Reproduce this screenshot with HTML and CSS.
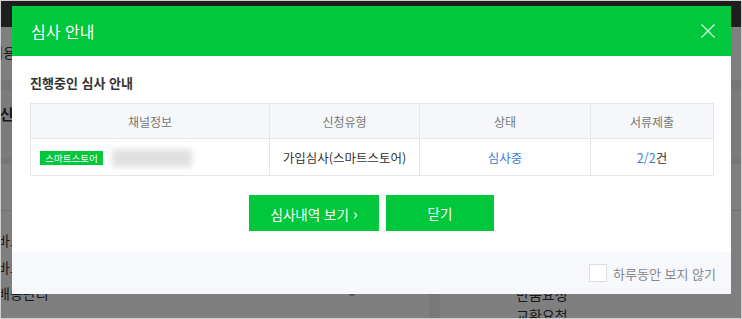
FILE: index.html
```html
<!DOCTYPE html>
<html lang="ko">
<head>
<meta charset="utf-8">
<title>심사 안내</title>
<link rel="stylesheet" href="styles.css">
</head>
<body>
<div class="frame">
  <div class="page">
    <div class="topbar"></div>
    <div class="section-top"><span class="cut-text">내용</span></div>
    <div class="panel"><span class="panel-title">최신</span></div>
    <div class="section-mid"></div>
    <div class="lower">
      <div class="lower-left">
        <div class="row-item">바로가기</div>
        <div class="row-item">바로가기</div>
        <div class="row-item">배송관리 <span class="dot"></span></div>
      </div>
      <div class="divider"></div>
      <div class="lower-right">
        <div class="row-item">반품요청</div>
        <div class="row-item">교환요청</div>
      </div>
    </div>
  </div>
  <div class="overlay"></div>

  <div class="modal">
    <div class="modal-header">
      <h1 class="modal-title">심사 안내</h1>
      <button class="close-btn" aria-label="닫기">
        <svg width="14" height="14" viewBox="0 0 14 14"><path d="M0.5 0.5L13.5 13.5M13.5 0.5L0.5 13.5" stroke="#d6f7e0" stroke-width="1.2" fill="none"/></svg>
      </button>
    </div>
    <div class="modal-body">
      <h2 class="sub-title">진행중인 심사 안내</h2>
      <table class="info-table">
        <colgroup>
          <col class="c1"><col class="c2"><col class="c3"><col class="c4">
        </colgroup>
        <thead>
          <tr><th>채널정보</th><th>신청유형</th><th>상태</th><th>서류제출</th></tr>
        </thead>
        <tbody>
          <tr>
            <td class="channel"><span class="badge">스마트스토어</span><span class="blurred"></span></td>
            <td>가입심사(스마트스토어)</td>
            <td><a class="link">심사중</a></td>
            <td><a class="link">2/2</a>건</td>
          </tr>
        </tbody>
      </table>
      <div class="actions">
        <button class="btn btn-wide">심사내역 보기 <span class="chev">›</span></button>
        <button class="btn btn-close">닫기</button>
      </div>
    </div>
    <div class="modal-footer">
      <label class="check"><span class="box"></span><span class="check-text">하루동안 보지 않기</span></label>
    </div>
  </div>
</div>
</body>
</html>
```
FILE: styles.css
```css
* { box-sizing: border-box; }
html, body { margin: 0; padding: 0; }
body {
  width: 742px;
  height: 319px;
  overflow: hidden;
  font-family: "Noto Sans CJK KR", "Noto Sans", sans-serif;
}
.frame {
  position: relative;
  width: 742px;
  height: 319px;
  overflow: hidden;
  border: 1px solid #cfcfcf;
}
.page {
  display: flex;
  flex-direction: column;
  height: 100%;
  background: #fff;
  color: #333;
  font-size: 13px;
}
.topbar { height: 26px; background: #3a3e3e; flex: none; }
.section-top { height: 53px; display: flex; align-items: center; flex: none; padding-bottom: 4px; }
.cut-text { margin-left: -11px; font-size: 14px; }
.panel {
  height: 84px;
  background: #f7f7f7;
  border-top: 10px solid #ececec;
  border-bottom: 6px solid #ececec;
  display: flex;
  align-items: center;
  flex: none;
  padding-bottom: 22px;
}
.panel-title { margin-left: -15px; font-weight: 700; font-size: 15px; }
.section-mid { height: 47px; border-bottom: 1px solid #e2e2e2; flex: none; }
.lower { display: flex; flex: 1; }
.lower-left { width: 428px; padding-top: 16px; }
.row-item { height: 26.5px; display: flex; align-items: center; margin-left: -4px; font-size: 14px; }
.dot { display: inline-block; width: 6px; height: 6px; border-radius: 50%; background: #b08ad0; margin-left: 300px; }
.divider { width: 11px; background: #f2f2f2; }
.lower-right { padding-left: 76px; padding-top: 72px; }
.lower-right .row-item { margin-left: 0; height: 21px; }
.overlay { position: absolute; inset: 0; background: rgba(0,0,0,0.5); }

.modal {
  position: absolute;
  left: 11px;
  top: 5px;
  width: 719px;
  height: 288px;
  background: #fff;
  display: flex;
  flex-direction: column;
}
.modal-header {
  height: 50px;
  flex: none;
  background: #00c73c;
  display: flex;
  align-items: center;
  justify-content: space-between;
  padding: 0 16px 0 19px;
}
.modal-title { margin: 0; font-size: 16px; font-weight: 400; color: #fff; letter-spacing: 0; }
.close-btn { border: 0; background: none; padding: 0; width: 14px; height: 14px; display: flex; }
.modal-body { flex: 1; padding: 17px 18px 0; }
.sub-title { margin: 0 0 10px; font-size: 13px; font-weight: 700; color: #333; line-height: 20px; }
.info-table {
  width: 683px;
  border-collapse: collapse;
  table-layout: fixed;
  font-size: 12px;
}
.c1 { width: 239px; } .c2 { width: 150px; } .c3 { width: 171px; } .c4 { width: 123px; }
.info-table th, .info-table td {
  border: 1px solid #e4e6ea;
  text-align: center;
  padding: 0;
}
.info-table th { height: 35px; background: #f6f7fa; color: #777; font-weight: 400; }
.info-table td { height: 37px; color: #333; font-size: 12.5px; }
.info-table td.channel { text-align: left; padding-left: 9px; }
.channel { white-space: nowrap; }
.badge {
  display: inline-block;
  vertical-align: middle;
  background: #00c73c;
  color: #fff;
  font-size: 9.5px;
  line-height: 14px;
  height: 14px;
  padding: 0 5px;
  width: 63px;
  text-align: center;
}
.blurred {
  display: inline-block;
  vertical-align: middle;
  width: 80px;
  height: 18px;
  margin-left: 9px;
  background: #e0e0e0;
  filter: blur(3px);
}
.link { color: #3a7fd6; }
.actions { display: flex; justify-content: center; gap: 7px; margin-top: 19px; }
.btn {
  height: 36px;
  border: 0;
  background: #00c73c;
  color: #fff;
  font-family: inherit;
  font-size: 13.5px;
  padding: 0;
}
.btn-wide { width: 130px; }
.btn-close { width: 108px; }
.chev { font-size: 16px; }
.modal-footer {
  height: 42px;
  flex: none;
  background: #f7f8fc;
  display: flex;
  align-items: center;
  justify-content: flex-end;
  padding-right: 15px;
}
.check { display: flex; align-items: center; gap: 6px; color: #888; font-size: 13px; }
.box { width: 18px; height: 18px; background: #fff; border: 1px solid #dcdde2; }
```
